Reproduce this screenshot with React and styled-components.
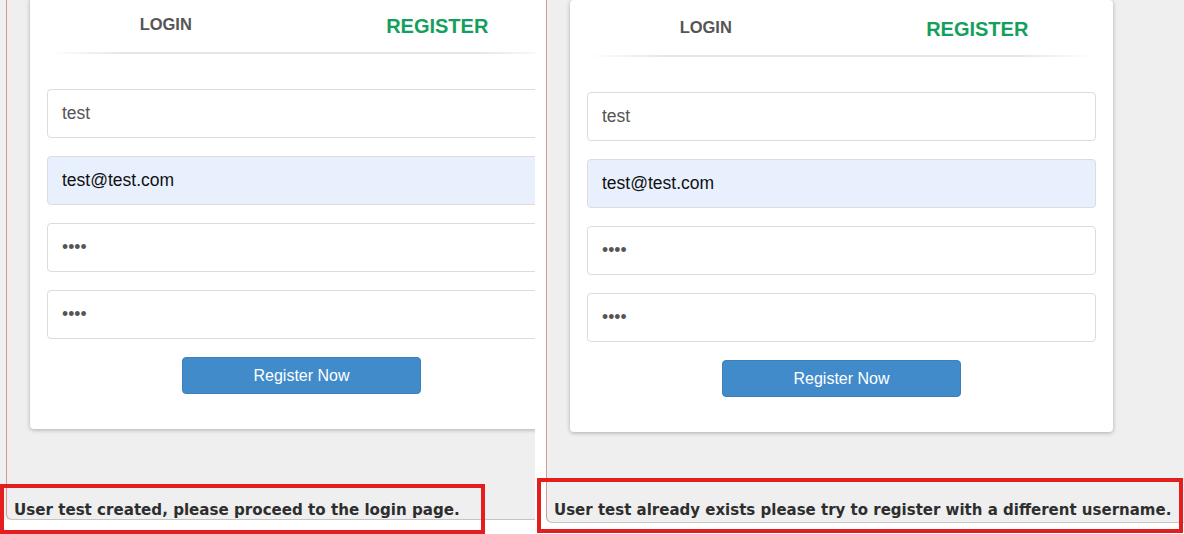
import React from 'react';
import styled, { createGlobalStyle } from 'styled-components';

const GlobalStyle = createGlobalStyle`
  html, body {
    margin: 0;
    padding: 0;
    background: #ffffff;
    font-family: 'Liberation Sans', Arial, sans-serif;
  }
`;

const Page = styled.div`
  position: relative;
  display: flex;
  width: 1184px;
  height: 534px;
  overflow: hidden;
  background: #ffffff;
`;

const Shot = styled.div`
  flex-shrink: 0;
  width: ${props => props.width}px;
  padding-left: ${props => props.lead}px;
  background: ${props => props.leadBg};
  height: ${props => props.frameHeight}px;
  box-sizing: border-box;
  display: flex;
`;

const Frame = styled.div`
  flex: 1;
  display: flex;
  flex-direction: column;
  align-items: flex-start;
  background: #efefef;
  border-left: 1px solid #d49a9a;
  border-bottom: 1px solid #c9c3c3;
  border-bottom-left-radius: 6px;
  padding-left: 23px;
  padding-top: ${props => props.shift}px;
  overflow: hidden;
`;

const Card = styled.div`
  flex-shrink: 0;
  width: 543px;
  box-sizing: border-box;
  margin-top: -3px;
  padding: 0 17px 35px;
  background: #ffffff;
  border-radius: 4px;
  box-shadow: 0 1px 4px rgba(0, 0, 0, 0.28);
`;

const TabRow = styled.div`
  display: flex;
  height: 55px;
  margin: 0 -17px;
`;

const Tab = styled.div`
  flex: 1;
  text-align: center;
  padding-top: 18px;
  font-weight: bold;
  font-size: ${props => props.active ? '20px' : '16.5px'};
  color: ${props => props.active ? '#14a05c' : '#555555'};
`;

const Divider = styled.div`
  height: 2px;
  margin: 0 1px;
  background: linear-gradient(to right, rgba(230,230,230,0), #e6e6e6 15%, #e6e6e6 85%, rgba(230,230,230,0));
`;

const Form = styled.div`
  display: flex;
  flex-direction: column;
  gap: 18px;
  padding-top: 35px;
`;

const Field = styled.input`
  box-sizing: border-box;
  height: 49px;
  width: 100%;
  padding: 0 14px;
  border: 1px solid #dcdcdc;
  border-radius: 4px;
  font-family: 'Liberation Sans', Arial, sans-serif;
  font-size: 17.5px;
  color: ${props => props.filled ? '#111' : '#555'};
  background: ${props => props.filled ? '#e8f0fe' : '#ffffff'};
  outline: none;
`;

const Button = styled.button`
  align-self: center;
  width: 239px;
  height: 37px;
  background-color: #418bca;
  color: #ffffff;
  border: 1px solid #3a80bd;
  border-radius: 4px;
  font-family: 'Liberation Sans', Arial, sans-serif;
  font-size: 16px;
  cursor: pointer;
`;

const Message = styled.div`
  margin-top: auto;
  margin-left: -16px;
  padding-bottom: ${props => props.drop}px;
  font-family: 'DejaVu Sans', Verdana, sans-serif;
  font-size: ${props => props.size}px;
  font-weight: bold;
  color: #2e2e2e;
  white-space: nowrap;
`;

const Highlight = styled.div`
  position: absolute;
  box-sizing: border-box;
  border: 4px solid #e41e1e;
`;

function Panel({ message, size, drop }) {
  return (
    <>
      <Card>
        <TabRow>
          <Tab>LOGIN</Tab>
          <Tab active>REGISTER</Tab>
        </TabRow>
        <Divider />
        <Form>
          <Field readOnly defaultValue="test" />
          <Field readOnly filled defaultValue="test@test.com" />
          <Field readOnly type="password" defaultValue="test" />
          <Field readOnly type="password" defaultValue="test" />
          <Button>Register Now</Button>
        </Form>
      </Card>
      <Message size={size} drop={drop}>{message}</Message>
    </>
  );
}

export default function App() {
  return (
    <Page>
      <GlobalStyle />
      <Shot width={535} lead={6} leadBg="#f0f0f0" frameHeight={520}>
        <Frame shift={0}>
          <Panel size={15.1} drop={0} message="User test created, please proceed to the login page." />
        </Frame>
      </Shot>
      <Shot width={649} lead={11} leadBg="#ffffff" frameHeight={523}>
        <Frame shift={3}>
          <Panel size={15} drop={3} message="User test already exists please try to register with a different username." />
        </Frame>
      </Shot>
      <Highlight style={{ left: 0, top: 484, width: 485, height: 50 }} />
      <Highlight style={{ left: 537, top: 478, width: 646, height: 55 }} />
    </Page>
  );
}
